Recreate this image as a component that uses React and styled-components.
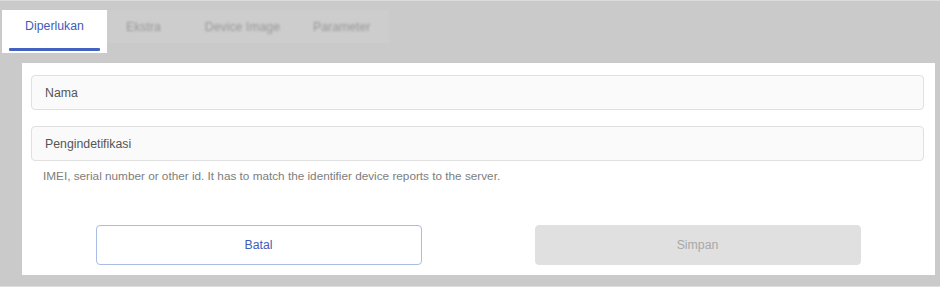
import React from 'react';
import styled, { createGlobalStyle } from 'styled-components';

const GlobalStyle = createGlobalStyle`
  html, body {
    margin: 0;
    padding: 0;
    background: #cacaca;
  }
  body {
    font-family: "Liberation Sans", Arial, sans-serif;
    width: 940px;
    height: 287px;
    overflow: hidden;
    box-sizing: border-box;
    border-top: 1px solid #dcdcdc;
    border-bottom: 1px solid #dedede;
  }
`;

const Page = styled.div`
  display: flex;
  flex-direction: column;
  padding-top: 9px;
`;

const TabBar = styled.div`
  display: flex;
  align-items: flex-start;
  margin-left: 2px;
`;

const ActiveTab = styled.div`
  width: 105px;
  height: 43px;
  background: #fff;
  display: flex;
  flex-direction: column;
  align-items: center;
  box-sizing: border-box;
  padding-top: 9px;
  font-size: 12.3px;
  color: #3f5cb8;

  &::after {
    content: '';
    margin-top: auto;
    margin-bottom: 2px;
    width: 91px;
    height: 3px;
    border-radius: 1px;
    background: #4462c0;
  }
`;

const OtherTabs = styled.div`
  display: flex;
  align-items: center;
  height: 33px;
  width: 282px;
  background: #cdcdcd;
`;

const Tab = styled.div`
  margin-left: ${(p) => p.$offset}px;
  font-size: 12.3px;
  color: #999;
  filter: blur(1.2px);
  white-space: nowrap;
`;

const Panel = styled.div`
  margin: 10px 0 0 22px;
  width: 913px;
  height: 212px;
  background: #fff;
  box-sizing: border-box;
  padding: 12px 11px 10px 9px;
  display: flex;
  flex-direction: column;
`;

const Field = styled.div`
  height: 35px;
  box-sizing: border-box;
  border: 1px solid #e0e0e0;
  border-radius: 4px;
  background: #fafafa;
  display: flex;
  align-items: center;
  padding-left: 13px;
  font-size: 12.3px;
  color: #555;
  margin-top: ${(p) => p.$gap || 0}px;
`;

const Hint = styled.div`
  margin: 8px 0 0 12px;
  font-size: 11.75px;
  color: #7d7d7d;
`;

const Actions = styled.div`
  margin-top: auto;
  display: flex;
  justify-content: center;
  gap: 113px;
  padding-left: 1px;
`;

const Button = styled.div`
  width: 326px;
  height: 40px;
  box-sizing: border-box;
  border-radius: 4px;
  display: flex;
  align-items: center;
  justify-content: center;
  font-size: 12.3px;
  border: 1px solid ${(p) => (p.$disabled ? '#e0e0e0' : '#a9bce6')};
  background: ${(p) => (p.$disabled ? '#e0e0e0' : '#fff')};
  color: ${(p) => (p.$disabled ? '#a8a8a8' : '#3f5cb8')};
`;

export default function App() {
  return (
    <>
      <GlobalStyle />
      <Page>
        <TabBar>
          <ActiveTab>Diperlukan</ActiveTab>
          <OtherTabs>
            <Tab $offset={19}>Ekstra</Tab>
            <Tab $offset={44}>Device Image</Tab>
            <Tab $offset={33}>Parameter</Tab>
          </OtherTabs>
        </TabBar>
        <Panel>
          <Field>Nama</Field>
          <Field $gap={16}>Pengindetifikasi</Field>
          <Hint>IMEI, serial number or other id. It has to match the identifier device reports to the server.</Hint>
          <Actions>
            <Button>Batal</Button>
            <Button $disabled>Simpan</Button>
          </Actions>
        </Panel>
      </Page>
    </>
  );
}
